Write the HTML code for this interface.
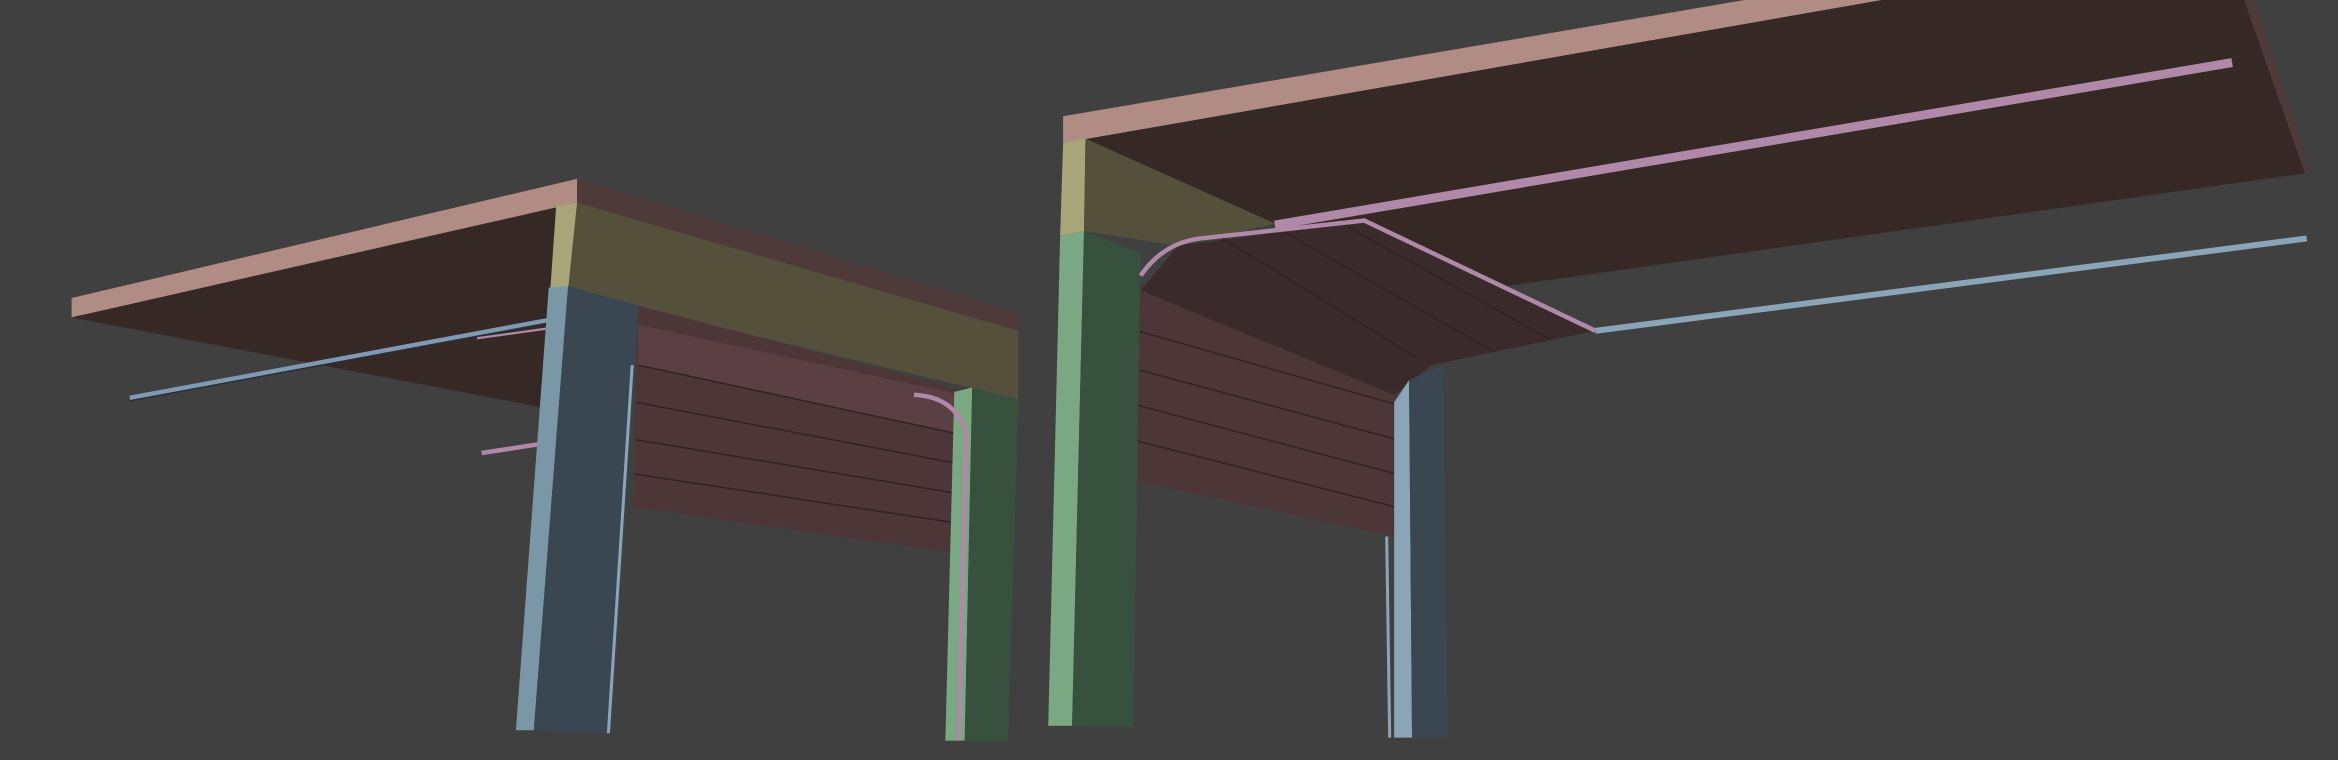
<!DOCTYPE html>
<html><head><meta charset="utf-8"><style>html,body{margin:0;padding:0;background:#404040;overflow:hidden}svg{display:block}</style></head>
<body>
<svg width="2338" height="760" viewBox="0 0 1568 510" preserveAspectRatio="none" xmlns="http://www.w3.org/2000/svg">
<rect width="1568" height="510" fill="#404040"/>
<!-- LEFT STRUCTURE -->
<polygon points="48,213 375,138 380,195 362,273" fill="#352825"/>
<polygon points="387,120 683,210 683,222 387,136" fill="#4e3a38"/>
<polygon points="48,200 387,120 387,136 48,213" fill="#b08c84"/>
<line x1="87" y1="267" x2="372" y2="214" stroke="#7f9ab0" stroke-width="3"/>
<line x1="87" y1="269" x2="372" y2="216" stroke="#2a3038" stroke-width="1"/>
<polygon points="373,138 387,136 683,222 683,268 380,195" fill="#54503c"/>
<polygon points="373,138 387,136 381,194 369,195" fill="#a8a678"/>
<line x1="320" y1="227" x2="370" y2="220" stroke="#b088a8" stroke-width="1.5"/>
<polygon points="428,205 645,262 648,372 424,340" fill="#4d3638"/>
<polygon points="428,218 645,265 645,292 428,245" fill="#5a4044"/>
<g stroke="#2e2224" stroke-width="1">
<line x1="428" y1="245" x2="646" y2="292"/><line x1="427" y1="270" x2="647" y2="312"/>
<line x1="426" y1="295" x2="647" y2="332"/><line x1="425" y1="318" x2="648" y2="352"/>
</g>
<line x1="323" y1="304" x2="362" y2="298" stroke="#b088a8" stroke-width="3"/>
<polygon points="368,193 381,192 358,490 346,490" fill="#7a97a8"/>
<polygon points="381,192 428,205 410,492 358,490" fill="#3a4752"/>
<line x1="424" y1="245" x2="408" y2="492" stroke="#8aa4b8" stroke-width="2"/>
<polygon points="640,263 652,260 647,497 634,497" fill="#7aa882"/>
<polygon points="652,260 683,268 676,497 647,497" fill="#38503e"/>
<path d="M613,265 Q640,266 648,290 L643,497" fill="none" stroke="#b088a8" stroke-width="3"/>
<!-- RIGHT STRUCTURE -->
<polygon points="728,93 1250,0 1505,0 1548,116 1010,192 960,170 855,150" fill="#352825"/>
<polygon points="1505,0 1512,0 1550,116 1546,117" fill="#4e3a38"/>
<polygon points="713,78 1170,0 1262,0 713,96" fill="#b08c84"/>
<line x1="855" y1="151" x2="1497" y2="42" stroke="#b088a8" stroke-width="6"/>
<line x1="1070" y1="222" x2="1547" y2="160" stroke="#8aa4b8" stroke-width="4"/>
<polygon points="713,96 728,93 727,155 711,158" fill="#a8a678"/>
<polygon points="728,93 855,150 790,165 727,155" fill="#54503c"/>
<polygon points="763,190 940,250 935,360 763,323" fill="#4d3638"/>
<polygon points="790,165 915,148 1070,222 960,245 935,265 765,195" fill="#3a2a2c"/>
<g stroke="#2e2224" stroke-width="1">
<line x1="763" y1="222" x2="938" y2="272"/><line x1="763" y1="248" x2="937" y2="295"/>
<line x1="763" y1="272" x2="936" y2="318"/><line x1="763" y1="296" x2="935" y2="340"/>
<line x1="820" y1="160" x2="950" y2="240"/><line x1="860" y1="155" x2="1000" y2="235"/><line x1="900" y1="150" x2="1040" y2="228"/>
</g>
<polygon points="711,158 727,155 719,487 703,487" fill="#7aa882"/>
<polygon points="727,155 765,170 760,488 719,487" fill="#38503e"/>
<path d="M765,185 Q780,163 805,160 L915,148 L1070,222" fill="none" stroke="#b088a8" stroke-width="3"/>
<polygon points="935,270 945,255 947,495 935,495" fill="#8aa4b8"/>
<polygon points="945,255 968,245 971,495 947,495" fill="#3a4752"/>
<line x1="930" y1="360" x2="932" y2="495" stroke="#8aa4b8" stroke-width="2"/>
</svg>
</body></html>
